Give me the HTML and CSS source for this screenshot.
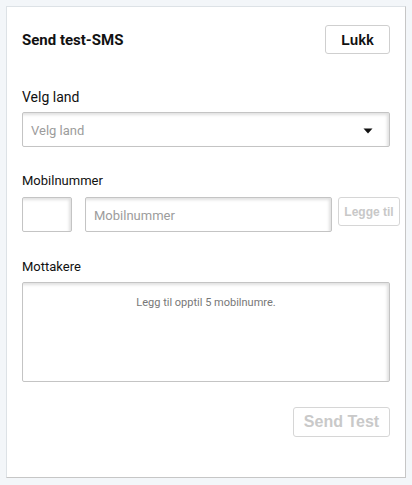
FILE: index.html
```html
<!DOCTYPE html>
<html lang="no">
<head>
<meta charset="utf-8">
<title>Send test-SMS</title>
<link rel="stylesheet" href="styles.css">
</head>
<body>
<div class="card">
  <div class="header">
    <h1 class="title">Send test-SMS</h1>
    <button class="btn btn-close" type="button">Lukk</button>
  </div>

  <label class="label label-country">Velg land</label>
  <div class="select">
    <span class="select-placeholder">Velg land</span>
    <svg class="caret" width="10" height="6" viewBox="0 0 10 6"><path d="M0.5 0.5 L9.5 0.5 L5 5.5 Z" fill="#111"/></svg>
  </div>

  <label class="label label-mobile">Mobilnummer</label>
  <div class="mobile-row">
    <div class="input input-prefix"></div>
    <div class="input input-number"><span class="placeholder">Mobilnummer</span></div>
    <button class="btn btn-add" type="button" disabled>Legge til</button>
  </div>

  <label class="label label-recipients">Mottakere</label>
  <div class="recipients">
    <span class="recipients-hint">Legg til opptil 5 mobilnumre.</span>
  </div>

  <div class="footer">
    <button class="btn btn-send" type="button" disabled>Send Test</button>
  </div>
</div>
</body>
</html>
```

FILE: styles.css
```css
* { box-sizing: border-box; }

html, body {
  margin: 0;
  padding: 0;
}

body {
  background: #f3f6f9;
  padding: 6px;
  font-family: Roboto, "Liberation Sans", Arial, sans-serif;
  color: #1a1a1a;
}

.card {
  width: 400px;
  height: 472px;
  background: #fff;
  border: 1px solid;
  border-color: #dde2e6 #c6c6c6 #c6c6c6 #dde2e6;
  padding: 18px 15px 0 15px;
  display: flex;
  flex-direction: column;
}

.header {
  display: flex;
  justify-content: space-between;
  align-items: center;
  height: 29px;
}

.title {
  margin: 0;
  font-size: 15px;
  font-weight: 700;
  color: #111;
}

.btn {
  font-family: "Liberation Sans", Arial, sans-serif;
  font-weight: 700;
  background: #fff;
  border: 1px solid #cfcfcf;
  border-radius: 3px;
  padding: 0;
  cursor: pointer;
}

.btn-close {
  width: 65px;
  height: 29px;
  font-size: 14px;
  color: #111;
}

.label {
  display: block;
  font-size: 13px;
  line-height: 16px;
  color: #111;
}

.label-country {
  font-size: 14px;
  line-height: 18px;
  margin-top: 34px;
}

.select {
  margin-top: 6px;
  height: 35px;
  border: 1px solid #c4c4c4;
  border-radius: 2px;
  box-shadow: inset -2px 2px 3px rgba(0, 0, 0, 0.12);
  display: flex;
  align-items: center;
  justify-content: space-between;
  padding: 2px 16px 0 8px;
}

.select-placeholder,
.placeholder {
  font-size: 13px;
  color: #9c9c9c;
}

.caret { display: block; }

.label-mobile { margin-top: 26px; }

.mobile-row {
  margin-top: 8px;
  display: flex;
  align-items: flex-start;
}

.mobile-row > * { flex-shrink: 0; }

.input {
  height: 35px;
  border: 1px solid #c4c4c4;
  border-radius: 2px;
  box-shadow: inset -2px 2px 3px rgba(0, 0, 0, 0.12);
}

.input-prefix { width: 50px; }

.input-number {
  width: 247px;
  margin-left: 13px;
  display: flex;
  align-items: center;
  padding: 2px 0 0 8px;
}

.btn-add {
  width: 62px;
  height: 29px;
  margin-left: 6px;
  font-size: 12px;
  color: #c8c8c8;
  border-color: #d6d6d6;
  cursor: default;
}

.label-recipients { margin-top: 27px; }

.recipients {
  margin-top: 7px;
  height: 100px;
  border: 1px solid #c4c4c4;
  border-radius: 2px;
  box-shadow: inset -2px 2px 3px rgba(0, 0, 0, 0.12);
  text-align: center;
  padding-top: 8px;
}

.recipients-hint {
  font-size: 11px;
  color: #777;
}

.footer {
  margin-top: 25px;
  display: flex;
  justify-content: flex-end;
}

.btn-send {
  width: 97px;
  height: 30px;
  font-size: 16px;
  color: #c9c9c9;
  border-color: #d6d6d6;
  cursor: default;
}
```
